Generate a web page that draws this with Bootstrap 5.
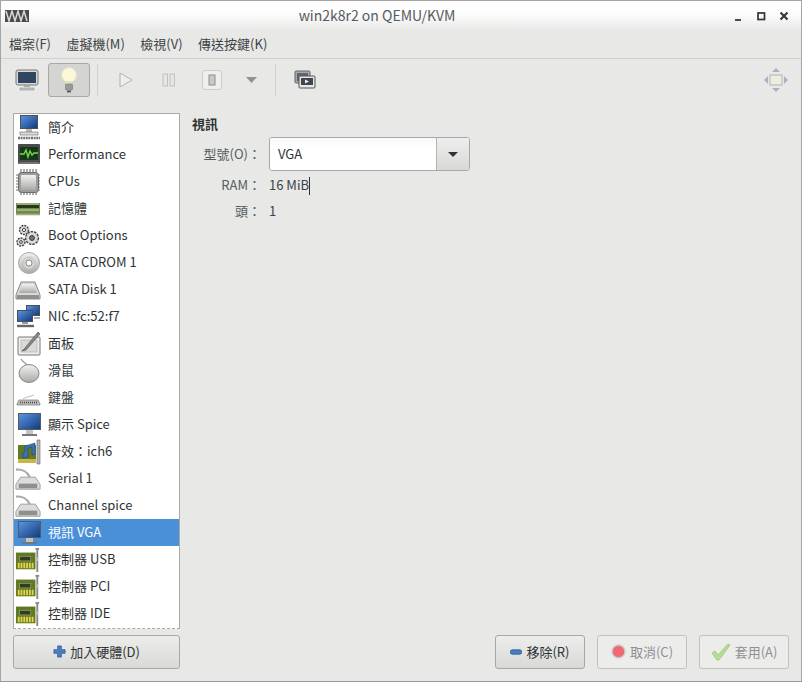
<!DOCTYPE html>
<html lang="zh-Hant">
<head>
<meta charset="utf-8">
<title>win2k8r2 on QEMU/KVM</title>
<link href="https://cdn.jsdelivr.net/npm/bootstrap@5.3.0/dist/css/bootstrap.min.css" rel="stylesheet">
<style>
html,body{height:100%;margin:0}
body{background:#e8e8e7;color:#2e3436;font-family:"Noto Sans CJK TC","Noto Sans",sans-serif;font-size:13px;overflow:hidden}
.win{height:682px;width:802px;border:1px solid #a5a5a3;border-bottom-color:#9a9a98;display:flex;flex-direction:column}
.tbar{height:30px;flex:none;background:linear-gradient(#fff,#fdfdfd 40%,#e8e8e7);display:flex;align-items:center;padding:0 12px 0 4px}
.tname{flex:1;text-align:center;font-size:14px;color:#545c5e;padding-right:8px;padding-bottom:1px}
.wbtns{display:flex;align-items:center;gap:13px}
.mbar{height:28px;flex:none;border-bottom:1px solid #cfcfcd;display:flex;align-items:center;padding:0 8px 2px;gap:15.5px;font-size:13px;color:#3c4345}
.mbar span{white-space:nowrap}
.tools{height:42px;flex:none;display:flex;align-items:center;padding:0 12px 0 4px}
.tbtn{width:43px;height:34px;display:flex;align-items:center;justify-content:center;flex:none;border:1px solid transparent;border-radius:3px}
.tbtn.on{width:42px;background:#d4d4d2;border-color:#a8a8a6}
.tbtn.nar{width:37px}
.tsep{width:1px;height:32px;background:#d0d0ce;flex:none;margin:0 6px 0 7px}
.tsep.s2{margin:0 7px 0 5px}
.body{flex:1;min-height:0;display:flex;padding:12px;gap:12px}
.side{width:167px;flex:none;display:flex;flex-direction:column}
.hwlist{height:516px;background:#fff;border:1px solid #a9a9a7;overflow:hidden;border-radius:1px;border-bottom-style:dashed}
.hwrow{height:27px;display:flex;align-items:center;gap:7px;padding-left:1px;white-space:nowrap;color:#2e3436}
.hwrow svg{flex:none}
.hwrow span{padding-bottom:2px}
.hwrow.sel{background:#4a90d9;color:#fff}
.addbtn{margin-top:6px;height:34px;width:167px}
.gbtn{display:flex;align-items:center;justify-content:center;gap:4px;border:1px solid #a8a8a6;border-radius:3px;background:linear-gradient(#ededec,#d9d9d7);font-size:13px;color:#2e3436;white-space:nowrap;padding:0 0 1px}
.gbtn.off{background:#ececeb;border-color:#c2c2c0;color:#8c9193}
.main{flex:1;display:flex;flex-direction:column;min-width:0}
.htitle{font-weight:700;font-size:13px;line-height:20px;color:#2e3436;padding-top:1px;height:21px}
.frow{display:flex;align-items:center}
.rowgap{height:24px;margin-top:2px}
.toprow{margin-top:3px}
.flab{width:69px;text-align:right;color:#545c5e;flex:none;white-space:nowrap}
.fsep{width:8px;flex:none}
.fval{color:#3c4345}
.combo{width:201px;height:34px;display:flex;border:1px solid #a8a8a6;border-radius:3px;overflow:hidden;background:#fff}
.combotext{flex:1;display:flex;align-items:center;padding-left:8px;color:#2e3436;background:linear-gradient(#f8f8f8,#fff 30%)}
.comboarrow{width:33px;border-left:1px solid #b4b4b2;background:linear-gradient(#eee,#d8d8d6);display:flex;align-items:center;justify-content:center}
.caret-line{display:inline-block;width:1px;height:18px;background:#2e3436;vertical-align:middle}
.bottom{margin-top:auto;display:flex;justify-content:flex-end;gap:12px}
.bottom .gbtn{width:90px;height:34px}
</style>
</head>
<body>
<svg width="0" height="0" class="visually-hidden">
<defs>
<linearGradient id="scr" x1="0" y1="0" x2="1" y2="1"><stop offset="0" stop-color="#5b93e0"/><stop offset="1" stop-color="#123c7c"/></linearGradient>
<linearGradient id="silver" x1="0" y1="0" x2="0" y2="1"><stop offset="0" stop-color="#f2f2f0"/><stop offset="1" stop-color="#a9a9a6"/></linearGradient>
<symbol id="i-desk" viewBox="0 0 26 26"><rect x="5" y="0" width="18" height="14" fill="#4a5058"/><rect x="6" y="1" width="16" height="12" fill="url(#scr)"/><rect x="11" y="14" width="6" height="3" fill="#bbb"/><rect x="5" y="17" width="18" height="3" fill="#dcdcdc" stroke="#666" stroke-width=".6"/><path d="M3 23h22" stroke="#777" stroke-width="2.4" stroke-dasharray="2 .6"/></symbol>
<symbol id="i-perf" viewBox="0 0 26 26"><rect x="3" y="2" width="22" height="20" rx="1" fill="#4c4c4c"/><rect x="5" y="5" width="18" height="13" fill="#14381a"/><path d="M5 12h4l2-4 2 7 2-6 2 4 2-2h4" fill="none" stroke="#78d848" stroke-width="1.4"/><path d="M4 21h20" stroke="#999"/></symbol>
<symbol id="i-cpu" viewBox="0 0 26 26"><path d="M6 0v26M9 0v26M12 0v26M15 0v26M18 0v26M21 0v26M1 6h24M1 9h24M1 12h24M1 15h24M1 18h24M1 21h24" stroke="#777" stroke-width="1.2" fill="none"/><rect x="3.5" y="3.5" width="20" height="20" rx="3" fill="#9c9c9a" stroke="#6d6d6b"/><rect x="6" y="6" width="15" height="15" rx="1" fill="url(#silver)"/></symbol>
<symbol id="i-ram" viewBox="0 0 26 26"><rect x="1" y="7" width="24" height="11" fill="#6f8a4d"/><rect x="2" y="9" width="22" height="3" fill="#28361c"/><path d="M2 8h22M2 14h22" stroke="#c6d4a8" stroke-width="1.2"/><path d="M1 18.5h24" stroke="#a9a982" stroke-width="1.6"/></symbol>
<symbol id="i-gear" viewBox="0 0 26 26"><g fill="#d8d8d6" stroke="#444" stroke-width="1.4"><circle cx="9" cy="7" r="4.5" stroke-dasharray="2 1"/><circle cx="17" cy="15" r="6.4" stroke-dasharray="2.5 1"/><circle cx="6" cy="19" r="4" stroke-dasharray="2 1"/></g><circle cx="9" cy="7" r="1.6" fill="#fff" stroke="#444"/><circle cx="17" cy="15" r="2.4" fill="#777" stroke="#333"/><circle cx="6" cy="19" r="1.4" fill="#fff" stroke="#444"/></symbol>
<symbol id="i-cd" viewBox="0 0 26 26"><circle cx="14" cy="13" r="10.5" fill="url(#silver)" stroke="#aaa"/><circle cx="14" cy="13" r="6" fill="#d4d4d2" stroke="#c4c4c2"/><circle cx="14" cy="13" r="3" fill="#fff" stroke="#888"/></symbol>
<symbol id="i-disk" viewBox="0 0 26 26"><path d="M6 5h14l5 13v4H1v-4z" fill="#d9d9d7" stroke="#888"/><path d="M2 18h22v4H2z" fill="#8f8f8d"/><path d="M7.5 7h11l3.5 9H4z" fill="url(#silver)"/></symbol>
<symbol id="i-nic" viewBox="0 0 26 26"><rect x="11" y="1" width="14" height="11" fill="#4a5058"/><rect x="12" y="2" width="12" height="9" fill="url(#scr)"/><rect x="2" y="6" width="16" height="12" fill="#4a5058"/><rect x="3" y="7" width="14" height="10" fill="url(#scr)"/><rect x="7" y="18" width="6" height="2" fill="#999"/><path d="M2 22h17" stroke="#666" stroke-width="2.4"/><path d="M19 14h6" stroke="#999" stroke-width="1.6" fill="none"/></symbol>
<symbol id="i-tab" viewBox="0 0 26 26"><rect x="3" y="6" width="22" height="18" rx="1" fill="#ededeb" stroke="#777"/><rect x="6" y="9" width="16" height="12" fill="#d9d9d7" stroke="#aaa" stroke-width=".6"/><path d="M23 1L10 17l-3 3 4-1L25 3z" fill="#888" stroke="#555" stroke-width=".7"/></symbol>
<symbol id="i-mouse" viewBox="0 0 26 26"><path d="M12 7C9 4 7 3 6 1" stroke="#8a9ab0" fill="none" stroke-width="1.2"/><ellipse cx="14" cy="15.5" rx="10" ry="9" fill="url(#silver)" stroke="#888"/></symbol>
<symbol id="i-key" viewBox="0 0 26 26"><path d="M8 14c4-3 7-2 11-4" stroke="#bbb" fill="none"/><path d="M4 15h19l2 4v1H2v-1z" fill="#bdbdbb" stroke="#777" stroke-width=".7"/><path d="M5 17.5h17" stroke="#444" stroke-dasharray="1 1" stroke-width="1.4"/></symbol>
<symbol id="i-mon" viewBox="0 0 26 26"><rect x="3" y="1" width="23" height="17" fill="#555b62"/><rect x="4" y="2" width="21" height="15" fill="url(#scr)"/><rect x="11" y="18" width="7" height="4" fill="#c4c4c2"/><path d="M7 23h15" stroke="#777" stroke-width="2"/></symbol>
<symbol id="i-snd" viewBox="0 0 26 26"><rect x="3" y="6" width="18" height="18" fill="#5e7a28"/><rect x="3" y="20" width="18" height="4" fill="#c9b54a"/><path d="M22 1h3v24h-3z" fill="#b4b4b2" stroke="#666" stroke-width=".6"/><path d="M10 7l10-3v11l-3 1V8l-4 1v9l-5 1v-5l2-1z" fill="#3f6fb8" stroke="#1d3a70" stroke-width=".5"/></symbol>
<symbol id="i-ser" viewBox="0 0 28 26"><path d="M1 3c6-1 12 2 15 8" stroke="#aaa" stroke-width="2.4" fill="none"/><path d="M6 11h16l5 8v5H1v-5z" fill="#dcdcda" stroke="#999"/><rect x="4" y="18" width="20" height="5" fill="#8f8f8d"/></symbol>
<symbol id="i-card" viewBox="0 0 28 28"><rect x="1" y="6" width="21" height="18" fill="#5f7a22"/><rect x="5" y="10" width="12" height="5" fill="#333a26" stroke="#aabb77" stroke-width=".6"/><path d="M3 20h17" stroke="#e6d34a" stroke-width="6" stroke-dasharray="2 1"/><path d="M22 2h4M24 2v25" stroke="#888" stroke-width="2" fill="none"/><path d="M22 11h3v4h-3z" fill="#bbb"/></symbol>
</defs>
</svg>
<div class="win">
  <div class="tbar">
    <svg width="24" height="12" viewBox="0 0 24 12"><rect width="24" height="12" fill="#4a4a4a"/><path d="M1 1l3 10 3-10 3 10 3-10 3 10 3-10 3 10" fill="none" stroke="#d8d8d8" stroke-width="1.5"/></svg>
    <div class="tname">win2k8r2 on QEMU/KVM</div>
    <div class="wbtns">
      <svg width="10" height="10" viewBox="0 0 10 10"><path d="M2 9h6" stroke="#454c4e" stroke-width="2"/></svg>
      <svg width="10" height="10" viewBox="0 0 10 10"><rect x="2" y="2" width="6.5" height="6.5" fill="none" stroke="#2e3436" stroke-width="1.7"/></svg>
      <svg width="10" height="10" viewBox="0 0 10 10"><path d="M1.5 1.5l7 7M8.5 1.5l-7 7" stroke="#2e3436" stroke-width="2"/></svg>
    </div>
  </div>
  <div class="mbar"><span>檔案(F)</span><span>虛擬機(M)</span><span>檢視(V)</span><span>傳送按鍵(K)</span></div>
  <div class="tools">
    <div class="tbtn"><svg width="24" height="22" viewBox="0 0 24 22"><rect x="1" y="1" width="22" height="15" rx="2" fill="#d9d9d7" stroke="#777"/><rect x="3" y="3" width="18" height="11" fill="#2f4560"/><path d="M9 16h6v2H9z" fill="#aaa"/><path d="M5 19h14v2H5z" fill="#c4c4c2" stroke="#888" stroke-width=".5"/></svg></div>
    <div class="tbtn on"><svg width="22" height="28" viewBox="0 0 22 28"><circle cx="11" cy="9" r="7.5" fill="#fbf8d6" stroke="#e2e2cc"/><path d="M8 15h6v3H8z" fill="#e6e2bc"/><rect x="7.5" y="18" width="7" height="6" rx="1" fill="#9a9a98" stroke="#777" stroke-width=".6"/><path d="M9 25.5h4" stroke="#555" stroke-width="1.8"/></svg></div>
    <div class="tsep"></div>
    <div class="tbtn"><svg width="16" height="16" viewBox="0 0 16 16"><path d="M2 1l12 7-12 7z" fill="#efefee" stroke="#b2b2b0"/></svg></div>
    <div class="tbtn"><svg width="14" height="14" viewBox="0 0 14 14"><rect x="1" y="1" width="4.5" height="12" fill="#e6e6e4" stroke="#c0c0be"/><rect x="8" y="1" width="4.5" height="12" fill="#e6e6e4" stroke="#c0c0be"/></svg></div>
    <div class="tbtn"><svg width="20" height="20" viewBox="0 0 20 20"><rect x=".5" y=".5" width="19" height="19" rx="2" fill="#efefee" stroke="#cbcbc9"/><rect x="7" y="5" width="6" height="10" fill="#c9c9c7" stroke="#8d8d8b"/></svg></div>
    <div class="tbtn nar"><svg width="11" height="6" viewBox="0 0 11 6"><path d="M0 0h11L5.5 6z" fill="#8f9394"/></svg></div>
    <div class="tsep s2"></div>
    <div class="tbtn"><svg width="22" height="20" viewBox="0 0 22 20"><rect x="1" y="1" width="15" height="12" rx="1" fill="#a9a9a7" stroke="#666"/><rect x="3" y="3" width="11" height="8" fill="#5c6670"/><rect x="5" y="6" width="16" height="12" rx="1" fill="#e6e6e4" stroke="#555"/><rect x="7" y="8" width="12" height="7" fill="#3d4650"/><path d="M11 9.5l4 2-4 2z" fill="#eee"/></svg></div>
    <div class="ms-auto d-flex"><svg width="26" height="26" viewBox="0 0 26 26"><path d="M13 1l4 4H9zM13 25l4-4H9zM1 13l4-4v8zM25 13l-4-4v8z" fill="#a9b0cc"/><rect x="7" y="8" width="12" height="10" fill="#ecece0" stroke="#b6b6b4"/></svg></div>
  </div>
  <div class="body">
    <div class="side">
      <div class="hwlist">
        <div class="hwrow"><svg width="26" height="26"><use href="#i-desk"/></svg><span>簡介</span></div>
        <div class="hwrow"><svg width="26" height="26"><use href="#i-perf"/></svg><span>Performance</span></div>
        <div class="hwrow"><svg width="26" height="26"><use href="#i-cpu"/></svg><span>CPUs</span></div>
        <div class="hwrow"><svg width="26" height="26"><use href="#i-ram"/></svg><span>記憶體</span></div>
        <div class="hwrow"><svg width="26" height="26"><use href="#i-gear"/></svg><span>Boot Options</span></div>
        <div class="hwrow"><svg width="26" height="26"><use href="#i-cd"/></svg><span>SATA CDROM 1</span></div>
        <div class="hwrow"><svg width="26" height="26"><use href="#i-disk"/></svg><span>SATA Disk 1</span></div>
        <div class="hwrow"><svg width="26" height="26"><use href="#i-nic"/></svg><span>NIC :fc:52:f7</span></div>
        <div class="hwrow"><svg width="26" height="26"><use href="#i-tab"/></svg><span>面板</span></div>
        <div class="hwrow"><svg width="26" height="26"><use href="#i-mouse"/></svg><span>滑鼠</span></div>
        <div class="hwrow"><svg width="26" height="26"><use href="#i-key"/></svg><span>鍵盤</span></div>
        <div class="hwrow"><svg width="26" height="26"><use href="#i-mon"/></svg><span>顯示 Spice</span></div>
        <div class="hwrow"><svg width="26" height="26"><use href="#i-snd"/></svg><span>音效：ich6</span></div>
        <div class="hwrow"><svg width="26" height="26"><use href="#i-ser"/></svg><span>Serial 1</span></div>
        <div class="hwrow"><svg width="26" height="26"><use href="#i-ser"/></svg><span>Channel spice</span></div>
        <div class="hwrow sel"><svg width="26" height="26"><use href="#i-mon"/></svg><span>視訊 VGA</span></div>
        <div class="hwrow"><svg width="26" height="26"><use href="#i-card"/></svg><span>控制器 USB</span></div>
        <div class="hwrow"><svg width="26" height="26"><use href="#i-card"/></svg><span>控制器 PCI</span></div>
        <div class="hwrow"><svg width="26" height="26"><use href="#i-card"/></svg><span>控制器 IDE</span></div>
      </div>
      <button type="button" class="gbtn addbtn"><svg width="13" height="13" viewBox="0 0 14 14"><path d="M5 1h4v4h4v4H9v4H5V9H1V5h4z" fill="#4a7fbe" stroke="#2e5c94" stroke-width=".8"/></svg>加入硬體(D)</button>
    </div>
    <div class="main">
      <div class="htitle">視訊</div>
      <div class="frow toprow"><div class="flab">型號(O)：</div><div class="fsep"></div><div class="combo"><div class="combotext">VGA</div><div class="comboarrow"><svg width="10" height="5" viewBox="0 0 10 5"><path d="M0 0h10L5 5z" fill="#2e3436"/></svg></div></div></div>
      <div class="frow rowgap"><div class="flab">RAM：</div><div class="fsep"></div><div class="fval">16 MiB<span class="caret-line"></span></div></div>
      <div class="frow rowgap"><div class="flab">頭：</div><div class="fsep"></div><div class="fval">1</div></div>
      <div class="bottom">
        <button type="button" class="gbtn"><svg width="12" height="6" viewBox="0 0 14 6"><rect x=".5" y=".5" width="13" height="5" rx="2" fill="#4a7fbe" stroke="#2e5c94"/></svg>移除(R)</button>
        <button type="button" class="gbtn off"><svg width="15" height="15" viewBox="0 0 15 15"><circle cx="7.5" cy="7.5" r="6.5" fill="#ee6a73" stroke="#ccc" stroke-width="1.4"/></svg>取消(C)</button>
        <button type="button" class="gbtn off"><svg width="20" height="18" viewBox="0 0 20 18"><path d="M1 10l3-2 3 4L17 1l2 1L8 17H6z" fill="#b6de8e" stroke="#9cc476" stroke-width=".8"/></svg>套用(A)</button>
      </div>
    </div>
  </div>
</div>
<script src="https://cdn.jsdelivr.net/npm/bootstrap@5.3.0/dist/js/bootstrap.bundle.min.js"></script>
</body>
</html>
